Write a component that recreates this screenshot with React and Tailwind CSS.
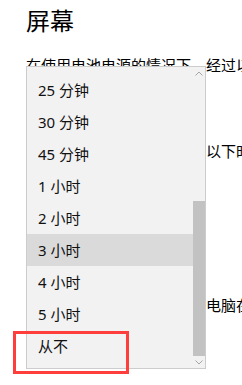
import React from "react";

const items = ["25 分钟", "30 分钟", "45 分钟", "1 小时", "2 小时", "3 小时", "4 小时", "5 小时", "从不"];

const Chevron = ({ up }) => (
  <svg width="8" height="5" viewBox="0 0 8 5" className="block">
    <path
      d={up ? "M0.5 4.5 L4 1 L7.5 4.5" : "M0.5 0.5 L4 4 L7.5 0.5"}
      fill="none"
      stroke="#a6a6a6"
      strokeWidth="1"
    />
  </svg>
);

export default function App() {
  return (
    <div
      className="relative w-[242px] h-[385px] overflow-hidden bg-white text-black"
      style={{ fontFamily: '"Noto Sans", "Noto Sans CJK SC", sans-serif' }}
    >
      <div className="pl-[26px] whitespace-nowrap">
        <h1 className="text-[24px] leading-[32px] pt-[5px] font-normal">屏幕</h1>
        <p className="text-[15px] leading-[20px] mt-[18px]">在使用电池电源的情况下，经过以下时间后关闭</p>
        <div className="h-[32px] mt-[8px] w-[160px] border-2 border-[#999]" />
        <p className="text-[15px] leading-[20px] mt-[26px]">在接通电源的情况下，经过以下时间后关闭</p>
        <div className="h-[32px] mt-[8px] w-[160px] border-2 border-[#999]" />
        <h2 className="text-[20px] leading-[28px] mt-[48px]">睡眠</h2>
        <p className="text-[15px] leading-[20px] mt-[18px]">在使用电池电源的情况下，电脑在经过以下时间后进入睡眠状态</p>
      </div>

      <div className="absolute left-[26px] top-[66px] w-[180px] h-[303px] flex border border-[#cccccc] bg-[#f2f2f2]">
        <ul className="flex-1 pt-[7px]">
          {items.map((t) => (
            <li
              key={t}
              className={`h-[32px] flex items-center pl-[11px] text-[15px] text-[#111] ${t === "3 小时" ? "bg-[#dadada]" : ""}`}
            >
              {t}
            </li>
          ))}
        </ul>
        <div className="w-[12px] flex flex-col">
          <div className="h-[12px] flex items-center justify-center">
            <Chevron up />
          </div>
          <div className="mt-[122px] h-[155px] bg-[#c2c2c2]" />
          <div className="h-[12px] flex items-center justify-center">
            <Chevron />
          </div>
        </div>
      </div>

      <div className="absolute left-[13px] top-[331px] w-[116px] h-[43px] border-[3px] border-[#fe3d3d]" />
    </div>
  );
}
